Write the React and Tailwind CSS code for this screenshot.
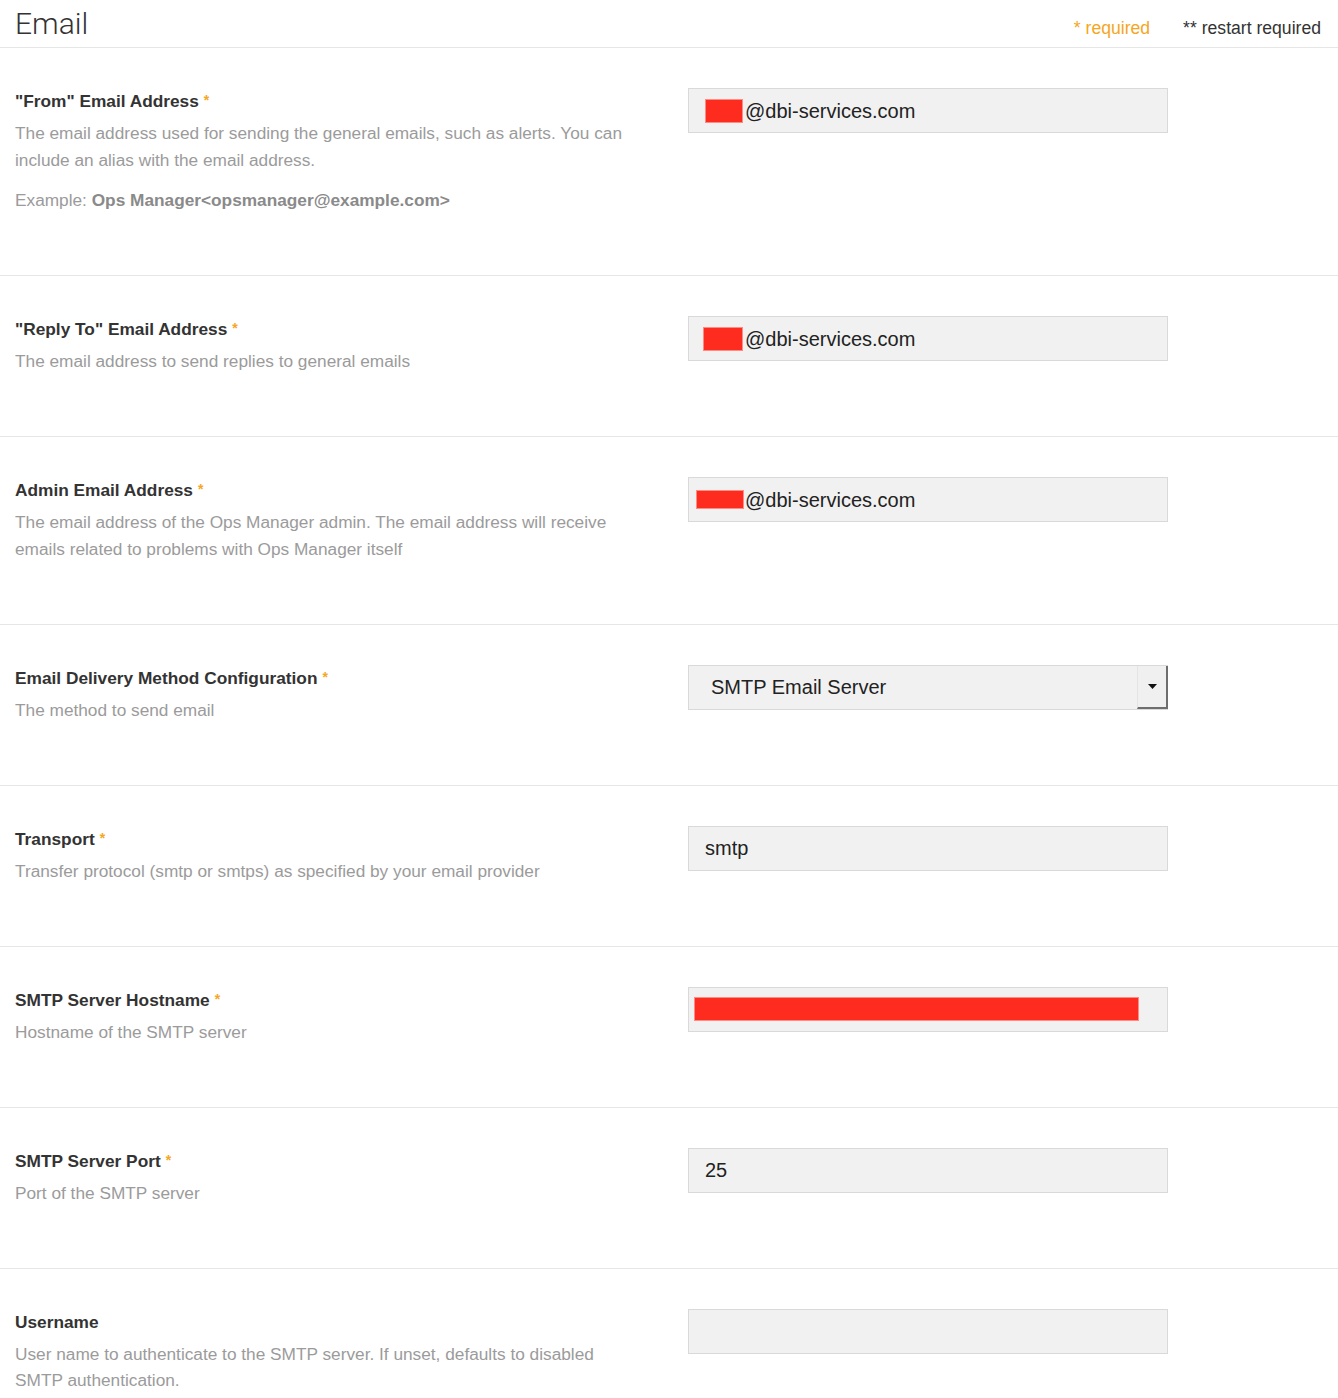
import React from "react";

const FONT = { fontFamily: '"Liberation Sans", Arial, sans-serif' };

function Req() {
  return <span className="relative top-[3px] ml-[5px] align-top text-[14px] leading-[18px] text-[#f5a623]">*</span>;
}

function Redact({ className }) {
  return <span className={"inline-block bg-[#fe2b1f] border border-[#ff8b82] " + className} />;
}

function TextInput({ children, pad = "pl-[16px]" }) {
  return (
    <div className={"flex h-[45px] w-[480px] items-center border border-[#d9d9d9] bg-[#f1f1f1] text-[20px] text-[#222] " + pad}>
      {children}
    </div>
  );
}

function SelectInput({ value }) {
  return (
    <div className="flex h-[45px] w-[480px] border-y border-l border-[#d9d9d9] bg-[#f1f1f1] text-[20px] text-[#222]">
      <div className="flex flex-1 items-center pl-[22px]">{value}</div>
      <div className="flex w-[31px] items-center justify-center border-l border-[#e4e4e4] border-r-2 border-b-2 border-r-[#6e6e6e] border-b-[#6e6e6e] bg-[#f0f0f0]">
        <svg width="9" height="5" viewBox="0 0 9 5" className="mt-[1px]">
          <path d="M0 0 H9 L4.5 5 Z" fill="#111" />
        </svg>
      </div>
    </div>
  );
}

function Row({ label, required = true, children, control }) {
  return (
    <div className="flex border-b border-[#e6e6e6] pt-10 pb-[61.5px]">
      <div className="w-[688px] shrink-0 pl-[15px] pr-[45px]">
        <div className="h-[26px] text-[17.3px] font-bold leading-[26px] text-[#333]">
          {label}
          {required && <Req />}
        </div>
        {children}
      </div>
      <div>{control}</div>
    </div>
  );
}

function Desc({ children, className = "mt-[6px]" }) {
  return <p className={"text-[17.25px] leading-[26.5px] text-[#9b9b9b] " + className}>{children}</p>;
}

export default function App() {
  return (
    <div className="min-h-screen bg-white" style={FONT}>
      <div className="flex h-[48px] items-end justify-between border-b border-[#e6e6e6] pl-[15px] pr-[17px] pb-[5px]">
        <h1 className="text-[30px] font-light leading-[36px] text-[#333]" style={{ fontFamily: "Roboto, sans-serif" }}>
          Email
        </h1>
        <div className="flex gap-[33px] pb-[1px] text-[17.6px] leading-[26px]">
          <span className="text-[#f5a623]">* required</span>
          <span className="text-[#333]">** restart required</span>
        </div>
      </div>

      <Row
        label={'"From" Email Address'}
        control={
          <TextInput>
            <Redact className="h-[24px] w-[38px]" />
            <span className="ml-[2px]">@dbi-services.com</span>
          </TextInput>
        }
      >
        <Desc>
          The email address used for sending the general emails, such as alerts. You can include an alias with the email
          address.
        </Desc>
        <Desc className="mt-[14px]">
          Example: <span className="font-bold text-[#8a8a8a]">Ops Manager&lt;opsmanager@example.com&gt;</span>
        </Desc>
      </Row>

      <Row
        label={'"Reply To" Email Address'}
        control={
          <TextInput pad="pl-[14px]">
            <Redact className="h-[24px] w-[40px]" />
            <span className="ml-[2px]">@dbi-services.com</span>
          </TextInput>
        }
      >
        <Desc>The email address to send replies to general emails</Desc>
      </Row>

      <Row
        label="Admin Email Address"
        control={
          <TextInput pad="pl-[7px]">
            <Redact className="h-[19px] w-[48px]" />
            <span className="ml-[1px]">@dbi-services.com</span>
          </TextInput>
        }
      >
        <Desc>
          The email address of the Ops Manager admin. The email address will receive emails related to problems with Ops
          Manager itself
        </Desc>
      </Row>

      <Row label="Email Delivery Method Configuration" control={<SelectInput value="SMTP Email Server" />}>
        <Desc>The method to send email</Desc>
      </Row>

      <Row label="Transport" control={<TextInput>smtp</TextInput>}>
        <Desc>Transfer protocol (smtp or smtps) as specified by your email provider</Desc>
      </Row>

      <Row
        label="SMTP Server Hostname"
        control={
          <TextInput pad="pl-[5px]">
            <Redact className="h-[24px] w-[445px]" />
          </TextInput>
        }
      >
        <Desc>Hostname of the SMTP server</Desc>
      </Row>

      <Row label="SMTP Server Port" control={<TextInput>25</TextInput>}>
        <Desc>Port of the SMTP server</Desc>
      </Row>

      <Row label="Username" required={false} control={<TextInput />}>
        <Desc>User name to authenticate to the SMTP server. If unset, defaults to disabled SMTP authentication.</Desc>
      </Row>
    </div>
  );
}
